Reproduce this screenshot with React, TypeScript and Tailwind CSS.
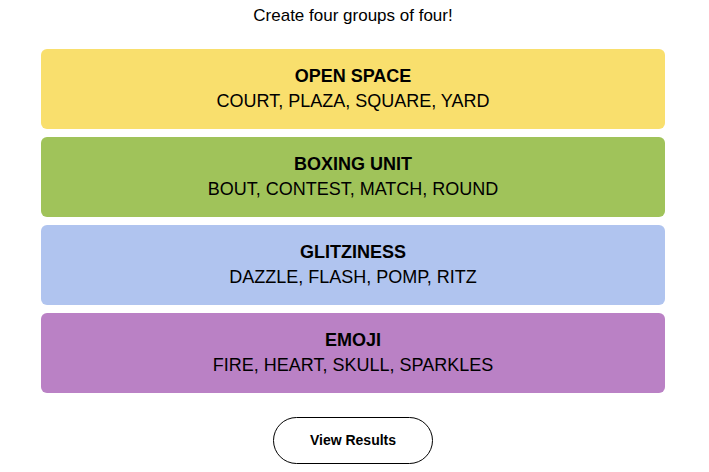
const groups = [
  { title: 'OPEN SPACE', words: 'COURT, PLAZA, SQUARE, YARD', color: 'bg-[#f9df6d]' },
  { title: 'BOXING UNIT', words: 'BOUT, CONTEST, MATCH, ROUND', color: 'bg-[#a0c35a]' },
  { title: 'GLITZINESS', words: 'DAZZLE, FLASH, POMP, RITZ', color: 'bg-[#b0c4ef]' },
  { title: 'EMOJI', words: 'FIRE, HEART, SKULL, SPARKLES', color: 'bg-[#ba81c5]' },
];

export default function App() {
  return (
    <div className="w-[709px] h-[472px] bg-white text-black font-['Liberation_Sans',Arial,sans-serif] overflow-hidden">
      <div className="w-[706px]">
        <p className="text-center text-[17px] leading-[20px] pt-[6px]">Create four groups of four!</p>

        <div className="mx-auto w-[624px] mt-[23px] flex flex-col gap-[8px]">
          {groups.map((g) => (
            <div
              key={g.title}
              className={`${g.color} h-[80px] rounded-[6px] flex flex-col items-center justify-center`}
            >
              <h3 className="text-[18px] leading-[22px] font-bold">{g.title}</h3>
              <p className="text-[18px] leading-[24px] mt-[2px]">{g.words}</p>
            </div>
          ))}
        </div>

        <div className="flex justify-center mt-[24px]">
          <button className="w-[160px] h-[47px] rounded-full border border-black text-[14px] font-semibold">
            View Results
          </button>
        </div>
      </div>
    </div>
  );
}
